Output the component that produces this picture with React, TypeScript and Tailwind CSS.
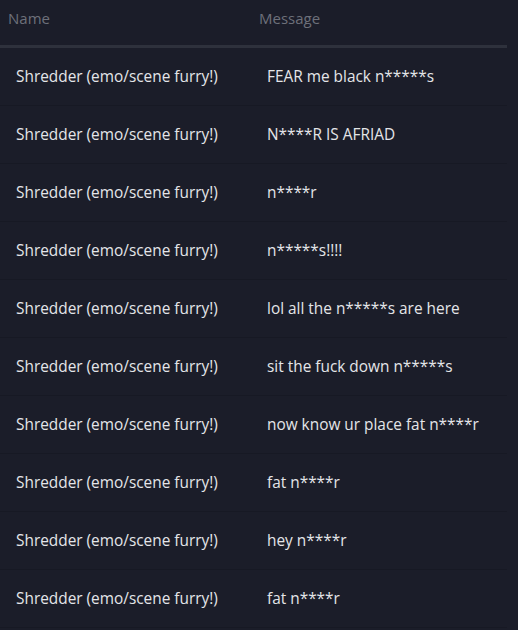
const rows = [
  "FEAR me black n*****s",
  "N****R IS AFRIAD",
  "n****r",
  "n*****s!!!!",
  "lol all the n*****s are here",
  "sit the fuck down n*****s",
  "now know ur place fat n****r",
  "fat n****r",
  "hey n****r",
  "fat n****r",
];

export default function App() {
  return (
    <div className="w-[518px] h-[630px] bg-[#1b1d29] overflow-hidden" style={{ fontFamily: '"Open Sans", sans-serif' }}>
      <div className="w-[507px]">
        <div className="flex h-[48px] items-center border-b-[3px] border-[#2e313c] text-[15px] text-[#6d707a]">
          <div className="w-[251px] pl-2 -mt-[9px]">Name</div>
          <div className="flex-1 pl-2 -mt-[9px]">Message</div>
        </div>
        {rows.map((m, i) => (
          <div key={i} className="flex h-[58px] items-center border-b border-[#171924] text-[15.4px] text-[#e4e5e8]">
            <div className="w-[251px] pl-4">Shredder (emo/scene furry!)</div>
            <div className="flex-1 pl-4">{m}</div>
          </div>
        ))}
      </div>
    </div>
  );
}
